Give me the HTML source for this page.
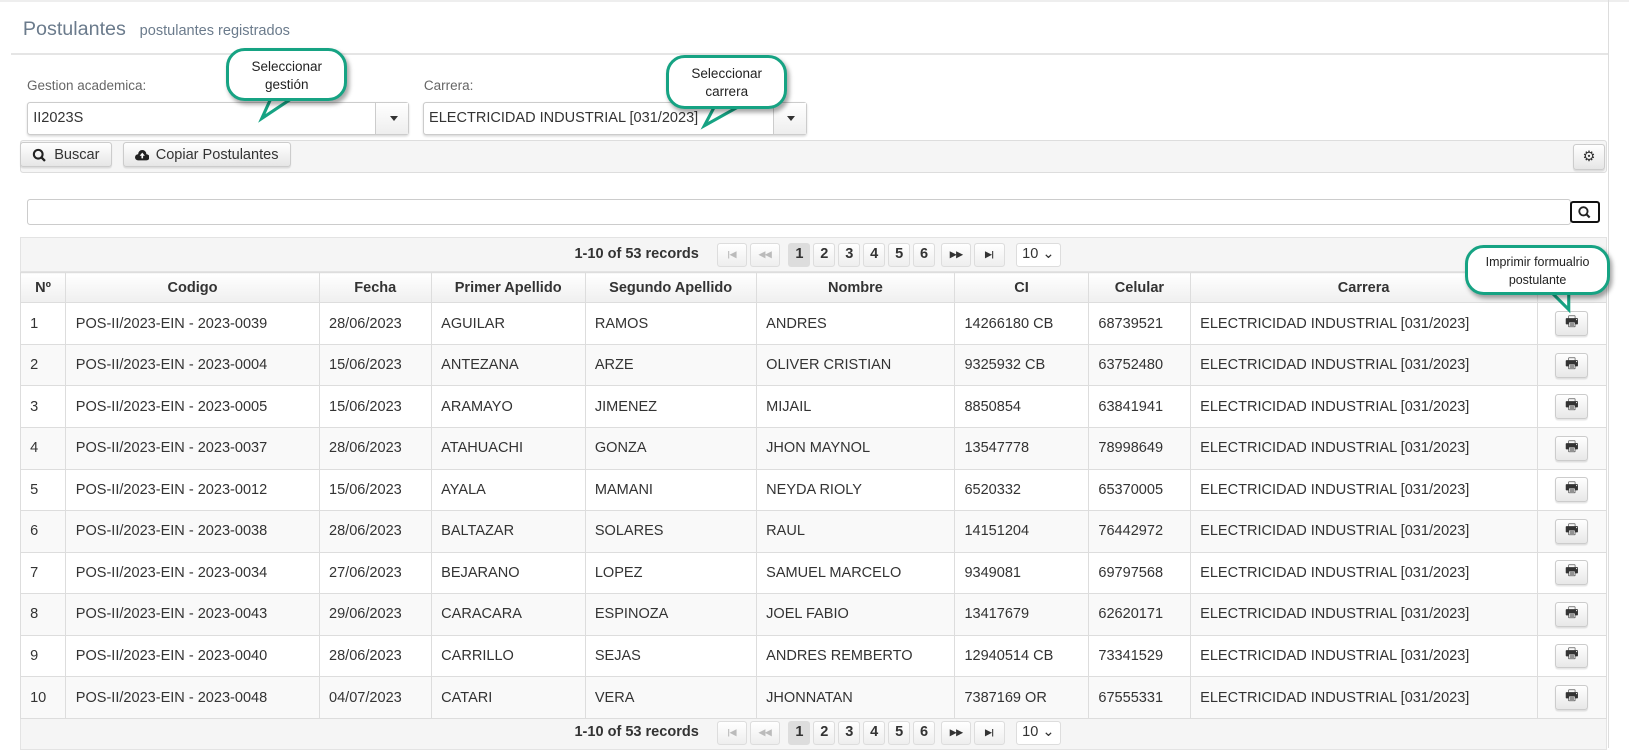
<!DOCTYPE html>
<html><head><meta charset="utf-8"><style>
*{box-sizing:border-box}
body{margin:0;width:1629px;height:748px;background:#fff;font-family:"Liberation Sans",sans-serif;font-size:13px;color:#333;position:relative;overflow:hidden}
#w{position:absolute;left:0;top:0;width:1568px;height:720px;zoom:1.0389}
.a{position:absolute}
.btn{position:absolute;border:1px solid #ccc;border-radius:3px;background:linear-gradient(#fff,#e6e6e6);font-size:14px;color:#333;display:flex;align-items:center;justify-content:center;box-shadow:0 1px 1px rgba(0,0,0,.1)}
.sel{position:absolute;border:1px solid #ccc;border-radius:3px;height:32px;background:#fff;font-size:14px;line-height:30px;padding-left:5px;box-shadow:0 1px 2px rgba(0,0,0,.15)}
.sel .ar{position:absolute;right:0;top:0;width:32px;height:30px;border-left:1px solid #ccc;background:linear-gradient(#fff,#eee)}
.sel .ar:after{content:"";position:absolute;left:13px;top:13px;border:4px solid transparent;border-top:5px solid #333}
table{position:absolute;left:19px;top:262px;width:1528px;border-collapse:collapse;font-size:14px}
td,th{border:1px solid #ddd;padding:0 9px;height:40px}
th{height:29px;font-weight:bold;text-align:center;background:linear-gradient(#fff,#efefef)}
tr:nth-child(odd) td{background:#f9f9f9}
.pg{position:absolute;left:19px;width:1528px;height:34px;background:#f5f5f5;border:1px solid #e3e3e3}
.pg .rec{position:absolute;left:533px;top:8px;font-weight:bold;font-size:14px}
.pb{position:absolute;top:5px;width:21px;height:23px;border:1px solid #ddd;border-radius:3px;background:linear-gradient(#fff,#eee);font-weight:bold;font-size:14px;text-align:center;line-height:21px}
.pb.d{color:#bbb;font-size:8px;width:29px}
.bub{position:absolute;border:3px solid #16a383;border-radius:18px;background:#fff;text-align:center;font-size:13px;line-height:17px;color:#222;box-shadow:2px 3px 4px rgba(0,0,0,.35)}
.pr{display:inline-flex;width:32px;height:24px;border:1px solid #ccc;border-radius:3px;background:linear-gradient(#fff,#e8e8e8);align-items:center;justify-content:center;box-shadow:0 1px 1px rgba(0,0,0,.1)}
</style></head><body><div id="w">
<div class="a" style="left:0;top:0;width:1568px;height:2px;background:#eee"></div>
<div class="a" style="left:1548px;top:0;width:1px;height:720px;background:#ddd"></div>
<div class="a" style="left:22px;top:17px;font-size:19px;color:#6b7b8c">Postulantes <span style="font-size:14px;margin-left:8px">postulantes registrados</span></div>
<div class="a" style="left:11px;top:51px;width:1537px;height:2px;background:#e5e5e5"></div>
<div class="a" style="left:26px;top:75px;font-size:13px;color:#666">Gestion academica:</div>
<div class="a" style="left:408px;top:75px;font-size:13px;color:#666">Carrera:</div>
<div class="sel" style="left:26px;top:98px;width:368px">II2023S<div class="ar"></div></div>
<div class="sel" style="left:407px;top:98px;width:370px">ELECTRICIDAD INDUSTRIAL [031/2023]<div class="ar"></div></div>
<div class="a" style="left:19px;top:135px;width:1528px;height:32px;border:1px solid #ddd;border-radius:3px;background:#f5f5f5"></div>
<div class="btn" style="left:19px;top:137px;width:89px;height:24px"><svg width="14" height="14" viewBox="0 0 14 14" style="margin-right:7px"><circle cx="6" cy="6" r="4.2" fill="none" stroke="#222" stroke-width="2"/><path d="M9 9l3.5 3.5" stroke="#222" stroke-width="2.2"/></svg>Buscar</div>
<div class="btn" style="left:118px;top:137px;width:162px;height:24px"><svg width="14" height="12" viewBox="0 0 14 12" style="margin-right:6px"><path d="M3 11a3 3 0 0 1 0-6a4 4 0 0 1 8 0a3 3 0 0 1 0 6z" fill="#222"/><path d="M7 3.5l-2.5 3h1.7v2.5h1.6v-2.5h1.7z" fill="#fff"/></svg>Copiar Postulantes</div>
<div class="btn" style="left:1514px;top:139px;width:31px;height:25px;font-size:14px">⚙</div>
<div class="a" style="left:26px;top:192px;width:1486px;height:25px;border:1px solid #ccc;border-radius:3px"></div>
<div class="a" style="left:1511px;top:193px;width:29px;height:22px;border:2px solid #111;border-radius:3px;background:#fff"><svg width="25" height="18" viewBox="0 0 25 18"><circle cx="11" cy="8" r="4" fill="none" stroke="#222" stroke-width="1.8"/><path d="M14 11l3 3" stroke="#222" stroke-width="2"/></svg></div>

<div class="pg" style="top:228px">
<div class="rec">1-10 of 53 records</div>
<div class="pb d" style="left:670px">|◀</div><div class="pb d" style="left:702px">◀◀</div>
<div class="pb" style="left:739px;background:#ddd">1</div><div class="pb" style="left:763px">2</div><div class="pb" style="left:787px">3</div><div class="pb" style="left:811px">4</div><div class="pb" style="left:835px">5</div><div class="pb" style="left:859px">6</div>
<div class="pb d" style="left:886px;color:#333">▶▶</div><div class="pb d" style="left:918px;color:#333">▶|</div>
<div class="pb" style="left:958px;width:43px;font-weight:normal;background:#fff">10 ⌄</div>
</div>
<div class="pg" style="top:688px">
<div class="rec">1-10 of 53 records</div>
<div class="pb d" style="left:670px">|◀</div><div class="pb d" style="left:702px">◀◀</div>
<div class="pb" style="left:739px;background:#ddd">1</div><div class="pb" style="left:763px">2</div><div class="pb" style="left:787px">3</div><div class="pb" style="left:811px">4</div><div class="pb" style="left:835px">5</div><div class="pb" style="left:859px">6</div>
<div class="pb d" style="left:886px;color:#333">▶▶</div><div class="pb d" style="left:918px;color:#333">▶|</div>
<div class="pb" style="left:958px;width:43px;font-weight:normal;background:#fff">10 ⌄</div>
</div>

<table>
<colgroup><col style="width:44px"><col style="width:244px"><col style="width:108px"><col style="width:148px"><col style="width:165px"><col style="width:191px"><col style="width:129px"><col style="width:98px"><col style="width:334px"><col style="width:67px"></colgroup>
<tr><th>Nº</th><th>Codigo</th><th>Fecha</th><th>Primer Apellido</th><th>Segundo Apellido</th><th>Nombre</th><th>CI</th><th>Celular</th><th>Carrera</th><th></th></tr>
<tr><td>1</td><td>POS-II/2023-EIN - 2023-0039</td><td>28/06/2023</td><td>AGUILAR</td><td>RAMOS</td><td>ANDRES</td><td>14266180 CB</td><td>68739521</td><td>ELECTRICIDAD INDUSTRIAL [031/2023]</td><td style="text-align:center"><span class="pr">🖶</span></td></tr>
<tr><td>2</td><td>POS-II/2023-EIN - 2023-0004</td><td>15/06/2023</td><td>ANTEZANA</td><td>ARZE</td><td>OLIVER CRISTIAN</td><td>9325932 CB</td><td>63752480</td><td>ELECTRICIDAD INDUSTRIAL [031/2023]</td><td style="text-align:center"><span class="pr">🖶</span></td></tr>
<tr><td>3</td><td>POS-II/2023-EIN - 2023-0005</td><td>15/06/2023</td><td>ARAMAYO</td><td>JIMENEZ</td><td>MIJAIL</td><td>8850854</td><td>63841941</td><td>ELECTRICIDAD INDUSTRIAL [031/2023]</td><td style="text-align:center"><span class="pr">🖶</span></td></tr>
<tr><td>4</td><td>POS-II/2023-EIN - 2023-0037</td><td>28/06/2023</td><td>ATAHUACHI</td><td>GONZA</td><td>JHON MAYNOL</td><td>13547778</td><td>78998649</td><td>ELECTRICIDAD INDUSTRIAL [031/2023]</td><td style="text-align:center"><span class="pr">🖶</span></td></tr>
<tr><td>5</td><td>POS-II/2023-EIN - 2023-0012</td><td>15/06/2023</td><td>AYALA</td><td>MAMANI</td><td>NEYDA RIOLY</td><td>6520332</td><td>65370005</td><td>ELECTRICIDAD INDUSTRIAL [031/2023]</td><td style="text-align:center"><span class="pr">🖶</span></td></tr>
<tr><td>6</td><td>POS-II/2023-EIN - 2023-0038</td><td>28/06/2023</td><td>BALTAZAR</td><td>SOLARES</td><td>RAUL</td><td>14151204</td><td>76442972</td><td>ELECTRICIDAD INDUSTRIAL [031/2023]</td><td style="text-align:center"><span class="pr">🖶</span></td></tr>
<tr><td>7</td><td>POS-II/2023-EIN - 2023-0034</td><td>27/06/2023</td><td>BEJARANO</td><td>LOPEZ</td><td>SAMUEL MARCELO</td><td>9349081</td><td>69797568</td><td>ELECTRICIDAD INDUSTRIAL [031/2023]</td><td style="text-align:center"><span class="pr">🖶</span></td></tr>
<tr><td>8</td><td>POS-II/2023-EIN - 2023-0043</td><td>29/06/2023</td><td>CARACARA</td><td>ESPINOZA</td><td>JOEL FABIO</td><td>13417679</td><td>62620171</td><td>ELECTRICIDAD INDUSTRIAL [031/2023]</td><td style="text-align:center"><span class="pr">🖶</span></td></tr>
<tr><td>9</td><td>POS-II/2023-EIN - 2023-0040</td><td>28/06/2023</td><td>CARRILLO</td><td>SEJAS</td><td>ANDRES REMBERTO</td><td>12940514 CB</td><td>73341529</td><td>ELECTRICIDAD INDUSTRIAL [031/2023]</td><td style="text-align:center"><span class="pr">🖶</span></td></tr>
<tr><td>10</td><td>POS-II/2023-EIN - 2023-0048</td><td>04/07/2023</td><td>CATARI</td><td>VERA</td><td>JHONNATAN</td><td>7387169 OR</td><td>67555331</td><td>ELECTRICIDAD INDUSTRIAL [031/2023]</td><td style="text-align:center"><span class="pr">🖶</span></td></tr>
</table>

<svg class="a" style="left:0;top:0" width="1568" height="720">
<path d="M262 92 L252 114 L285 92" fill="#fff" stroke="#16a383" stroke-width="3"/>
<path d="M688 102 L678 121 L712 102" fill="#fff" stroke="#16a383" stroke-width="3"/>
<path d="M1492 280 L1510 298 L1510 280" fill="#fff" stroke="#16a383" stroke-width="3"/>
</svg>
<div class="bub" style="left:218px;top:46px;width:116px;height:51px;padding-top:7px">Seleccionar<br>gestión</div>
<div class="bub" style="left:641px;top:53px;width:117px;height:52px;padding-top:7px">Seleccionar<br>carrera</div>
<div class="bub" style="left:1410px;top:236px;width:140px;height:48px;padding-top:6px;font-size:12px">Imprimir formualrio<br>postulante</div>
</div></body></html>
